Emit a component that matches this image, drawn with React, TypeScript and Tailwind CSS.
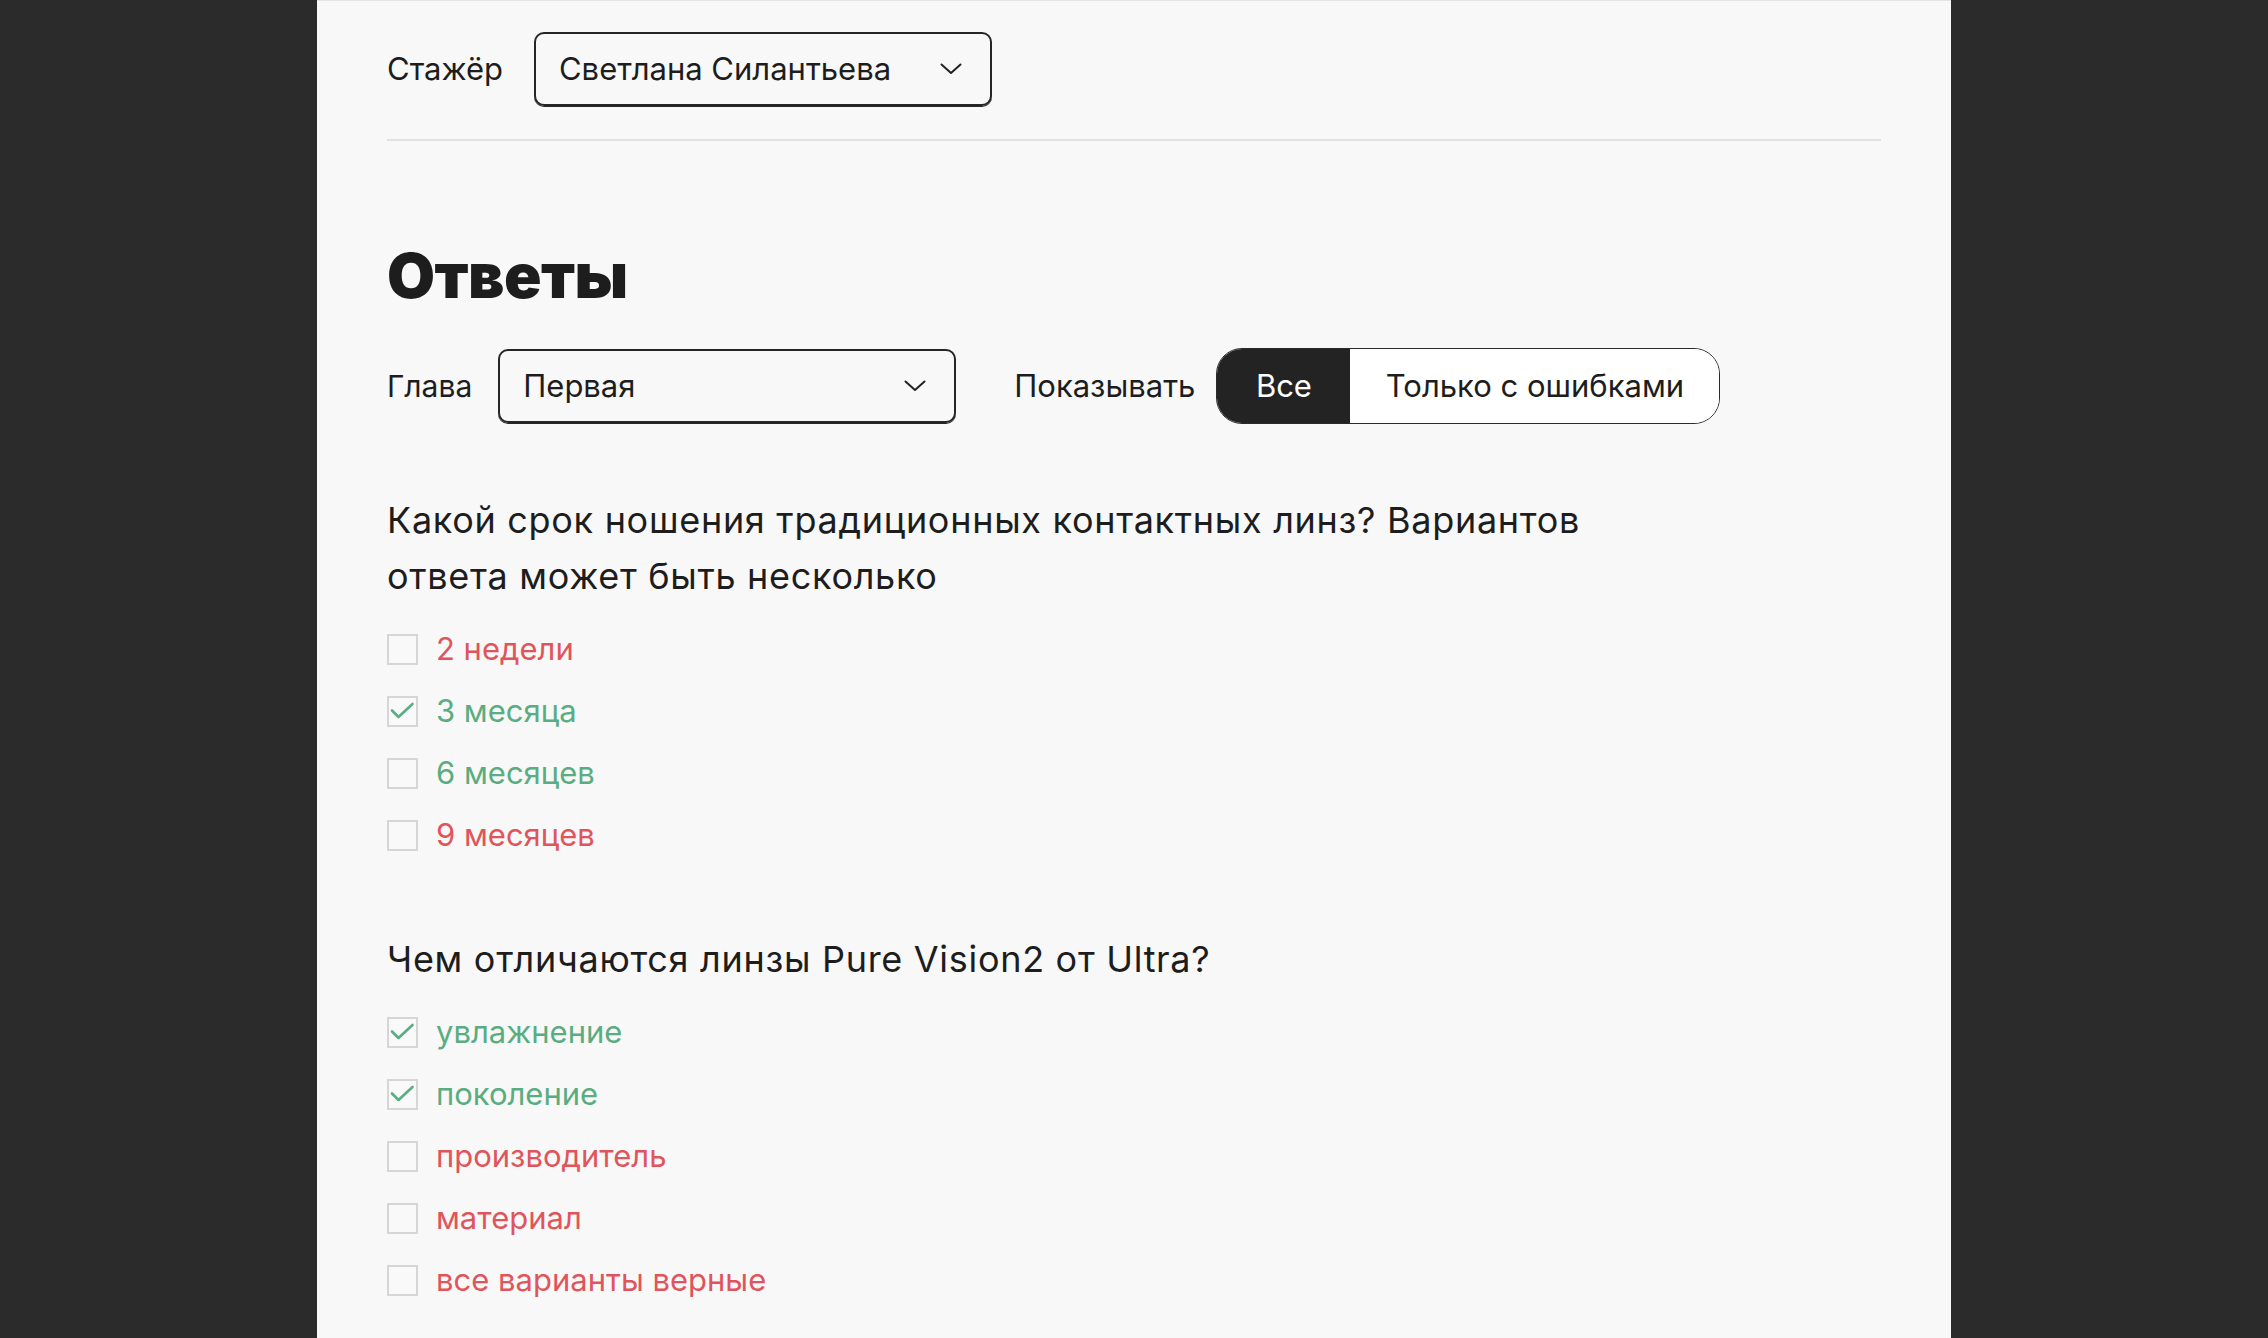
import type { FC } from "react";

type Option = { text: string; checked: boolean; correct: boolean };

const questions: { title: string[]; options: Option[] }[] = [
	{
		title: ["Какой срок ношения традиционных контактных линз? Вариантов", "ответа может быть несколько"],
		options: [
			{ text: "2 недели", checked: false, correct: false },
			{ text: "3 месяца", checked: true, correct: true },
			{ text: "6 месяцев", checked: false, correct: true },
			{ text: "9 месяцев", checked: false, correct: false },
		],
	},
	{
		title: ["Чем отличаются линзы Pure Vision2 от Ultra?"],
		options: [
			{ text: "увлажнение", checked: true, correct: true },
			{ text: "поколение", checked: true, correct: true },
			{ text: "производитель", checked: false, correct: false },
			{ text: "материал", checked: false, correct: false },
			{ text: "все варианты верные", checked: false, correct: false },
		],
	},
];

const Chevron: FC = () => (
	<svg width="22" height="12" viewBox="0 0 22 12" fill="none" className="shrink-0">
		<path d="M1.5 1.5 11 10l9.5-8.5" stroke="#222" strokeWidth="2" strokeLinecap="round" strokeLinejoin="round" />
	</svg>
);

const Select: FC<{ value: string }> = ({ value }) => (
	<div className="flex h-[74px] w-[458px] items-center justify-between rounded-[10px] border-2 border-[#262626] pl-[23px] pr-[28px] shadow-[0_1px_0_#262626]">
		<span className="text-[31px] text-[#1d1d1d]">{value}</span>
		<Chevron />
	</div>
);

const Checkbox: FC<{ checked: boolean }> = ({ checked }) => (
	<div className="flex size-[31px] shrink-0 items-center justify-center border-2 border-[#d6d6d6] bg-[#f9f9f9]">
		{checked && (
			<svg width="27" height="27" viewBox="0 0 27 27" fill="none">
				<path d="M3 12.5 9.5 19 23.5 6" stroke="#5aad80" strokeWidth="2.6" strokeLinecap="round" strokeLinejoin="round" />
			</svg>
		)}
	</div>
);

export default function App() {
	return (
		<div className="flex min-h-screen justify-center bg-[#2b2b2b] font-['Inter',sans-serif]">
			<main className="h-[1338px] w-[1634px] overflow-hidden border-t border-[#e4e4e4] bg-[#f8f8f8] px-[70px]">
				<div className="flex items-center gap-[31px] pt-[31px]">
					<span className="text-[31px] text-[#1d1d1d]">Стажёр</span>
					<Select value="Светлана Силантьева" />
				</div>
				<div className="mt-[33px] h-[2px] bg-[#e2e2e2]" />

				<h1 className="mt-[104px] text-[62px] font-black leading-none tracking-[-0.5px] text-[#1d1d1d]">Ответы</h1>

				<div className="mt-[41px] flex items-center">
					<span className="text-[30px] text-[#1d1d1d]">Глава</span>
					<div className="ml-[26px]">
						<Select value="Первая" />
					</div>
					<span className="ml-[58px] text-[31px] text-[#1d1d1d]">Показывать</span>
					<div className="ml-[21px] flex h-[76px] overflow-hidden rounded-[26px] border-[1.5px] border-[#2a2a2a]">
						<button className="flex w-[133px] items-center justify-center bg-[#232323] text-[31px] text-white">Все</button>
						<button className="flex w-[369px] items-center justify-center bg-white text-[31px] text-[#1d1d1d]">
							Только с ошибками
						</button>
					</div>
				</div>

				{questions.map((q, qi) => (
					<section key={qi} className={qi === 0 ? "mt-[68px]" : "mt-[80px]"}>
						<h2 className="text-[36px] leading-[56px] tracking-[0.7px] text-[#1d1d1d]">
							{q.title.map((line, li) => (
								<span key={li} className="block">
									{line}
								</span>
							))}
						</h2>
						<ul className="mt-[30px] flex flex-col gap-[31px]">
							{q.options.map((o) => (
								<li key={o.text} className="flex h-[31px] items-center gap-[18px]">
									<Checkbox checked={o.checked} />
									<span className={`text-[31px] ${o.correct ? "text-[#5aad80]" : "text-[#e0555b]"}`}>{o.text}</span>
								</li>
							))}
						</ul>
					</section>
				))}
			</main>
		</div>
	);
}
